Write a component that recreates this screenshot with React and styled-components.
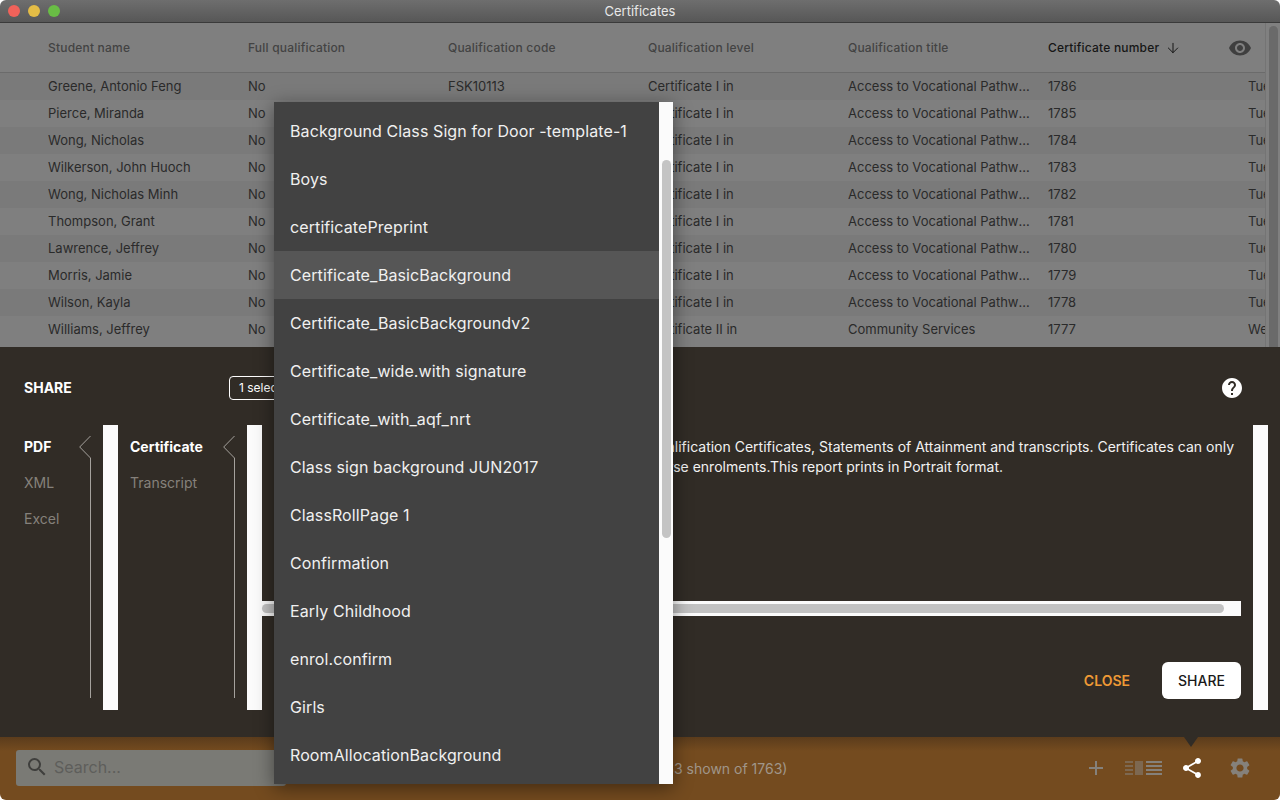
import React from "react";
import styled, { createGlobalStyle } from "styled-components";
import { MdAdd, MdHelp, MdSearch, MdSettings, MdShare, MdVisibility } from "react-icons/md";
import { ArrowDown } from "lucide-react";

const GlobalStyle = createGlobalStyle`
  html, body {
    margin: 0;
    height: 100%;
    background: #fff;
    font-family: Inter, "Noto Sans", sans-serif;
  }
  #root { height: 100%; }
`;

const Window = styled.div`
  position: relative;
  display: flex;
  flex-direction: column;
  width: 1280px;
  height: 800px;
  overflow: hidden;
  border-radius: 6px;
`;

const TitleBar = styled.div`
  position: relative;
  display: flex;
  align-items: center;
  justify-content: center;
  height: 22px;
  flex-shrink: 0;
  background: linear-gradient(#6e6e6e, #575757);
  border-bottom: 1px solid #3a3a3a;
  color: #e8e8e8;
  font-size: 13px;
`;

const Lights = styled.div`
  position: absolute;
  left: 8px;
  top: 5px;
  display: flex;
  gap: 8px;
`;

const Light = styled.span`
  width: 12px;
  height: 12px;
  border-radius: 50%;
  background: ${(props) => props.color};
`;

const TableArea = styled.div`
  display: flex;
  height: 324px;
  flex-shrink: 0;
  background: #7f7f7f;
  overflow: hidden;
`;

const Table = styled.div`
  flex: 1;
  min-width: 0;
  overflow: hidden;
`;

const HeaderRow = styled.div`
  display: flex;
  align-items: center;
  height: 49px;
  padding-left: 48px;
  border-bottom: 1px solid #6b6b6b;
  box-sizing: content-box;
`;

const HeaderCell = styled.div`
  display: flex;
  align-items: center;
  gap: 6px;
  width: 200px;
  flex-shrink: 0;
  font-size: 12px;
  font-weight: 500;
  letter-spacing: 0.2px;
  color: ${(props) => (props.active ? "#161616" : "#434343")};
`;

const Row = styled.div`
  display: flex;
  align-items: center;
  height: 27px;
  padding: 0 0 2px 48px;
  box-sizing: border-box;
  background: ${(props) => (props.odd ? "#7a7a7a" : "#7f7f7f")};
`;

const Cell = styled.div`
  width: 200px;
  flex-shrink: 0;
  padding-right: 16px;
  box-sizing: border-box;
  font-size: 13px;
  color: #2a2a2a;
  white-space: nowrap;
  overflow: hidden;
  text-overflow: ellipsis;
`;

const LastCell = styled(Cell)`
  width: 100px;
  padding: 0;
  text-overflow: clip;
`;

const TableScroll = styled.div`
  width: 15px;
  flex-shrink: 0;
  background: #808080;
  border-left: 1px solid #747474;
  box-sizing: border-box;
  padding: 3px 2px 0 3px;
`;

const TableThumb = styled.div`
  height: 340px;
  border-radius: 5px;
  background: #6a6a6a;
`;

const SharePanel = styled.div`
  display: flex;
  flex-direction: column;
  height: 390px;
  flex-shrink: 0;
  box-sizing: border-box;
  padding: 0 12px 27px 0;
  background: #312c26;
  color: #fff;
`;

const PanelHeader = styled.div`
  display: flex;
  align-items: center;
  height: 78px;
  flex-shrink: 0;
  padding: 3px 24px 0 24px;
  box-sizing: border-box;
`;

const PanelTitle = styled.div`
  width: 205px;
  font-size: 14px;
  font-weight: 700;
`;

const SelectedPill = styled.div`
  display: flex;
  align-items: center;
  height: 24px;
  padding: 0 9px;
  box-sizing: border-box;
  border: 1px solid #fff;
  border-radius: 4px;
  font-size: 12px;
`;

const HelpButton = styled.div`
  display: flex;
  margin-left: auto;
  font-size: 24px;
  color: #fff;
`;

const PanelBody = styled.div`
  display: flex;
  flex: 1;
  min-height: 0;
`;

const NavColumn = styled.div`
  display: flex;
  justify-content: space-between;
  width: ${(props) => props.width}px;
  flex-shrink: 0;
  padding-left: ${(props) => props.inset}px;
  padding-right: 12px;
  box-sizing: border-box;
`;

const NavList = styled.div`
  display: flex;
  flex-direction: column;
  padding-top: 3px;
`;

const NavItem = styled.div`
  display: flex;
  align-items: center;
  height: 36px;
  font-size: 14px;
  font-weight: ${(props) => (props.active ? 700 : 400)};
  color: ${(props) => (props.active ? "#fff" : "#85817b")};
`;

const WhiteBar = styled.div`
  width: 15px;
  flex-shrink: 0;
  background: #fbfbfb;
`;

const MainPane = styled.div`
  display: flex;
  flex: 1;
  min-width: 0;
  flex-direction: column;
  padding-right: 12px;
`;

const Description = styled.div`
  height: 176px;
  flex-shrink: 0;
  padding: 12px 0 0 210px;
  font-size: 14px;
  line-height: 20px;
  color: #f2f2f2;
  white-space: nowrap;
  box-sizing: border-box;
`;

const HScroll = styled.div`
  display: flex;
  align-items: center;
  height: 15px;
  padding: 0 17px 0 0;
  background: #fbfbfb;
`;

const HThumb = styled.div`
  flex: 1;
  height: 9px;
  border-radius: 5px;
  background: #c2c2c2;
`;

const ButtonRow = styled.div`
  display: flex;
  align-items: center;
  justify-content: flex-end;
  gap: 32px;
  margin-top: 46px;
`;

const CloseButton = styled.div`
  font-size: 14px;
  font-weight: 600;
  color: #ef9a35;
`;

const ShareButton = styled.div`
  display: flex;
  align-items: center;
  justify-content: center;
  width: 79px;
  height: 37px;
  border-radius: 6px;
  background: #fff;
  color: #1a1a1a;
  font-size: 14px;
  font-weight: 500;
`;

const BottomBar = styled.div`
  position: relative;
  display: flex;
  flex: 1;
  align-items: center;
  padding: 0 28px 1px 16px;
  background: linear-gradient(#5b3c1c, #744b1f 14px);
`;

const SearchBox = styled.div`
  display: flex;
  align-items: center;
  gap: 5px;
  width: 270px;
  height: 36px;
  padding: 0 0 3px 9px;
  box-sizing: border-box;
  border-radius: 3px;
  background: #7a7a75;
  color: #3f3f3d;
  font-size: 16px;
  flex-shrink: 0;
`;

const SearchText = styled.span`
  color: #5e5e5b;
`;

const Status = styled.div`
  flex: 1;
  padding-left: 285px;
  font-size: 14px;
  color: #a0968a;
  white-space: nowrap;
`;

const BarIcons = styled.div`
  display: flex;
  align-items: center;
  color: #85817b;
`;

const IconSlot = styled.div`
  display: flex;
  margin-left: ${(props) => props.gap || 0}px;
  color: ${(props) => (props.active ? "#fff" : "#85817b")};
`;

const Pointer = styled.div`
  position: absolute;
  right: 82px;
  top: 0;
  width: 0;
  height: 0;
  border-left: 7px solid transparent;
  border-right: 7px solid transparent;
  border-top: 10px solid #312c26;
`;

const Menu = styled.div`
  position: absolute;
  left: 274px;
  top: 102px;
  display: flex;
  width: 399px;
  height: 682px;
  box-shadow: 0 4px 18px rgba(0, 0, 0, 0.45);
`;

const MenuList = styled.div`
  flex: 1;
  padding-top: 5px;
  background: #424242;
`;

const MenuItem = styled.div`
  display: flex;
  align-items: center;
  height: 48px;
  padding-left: 16px;
  font-size: 16px;
  letter-spacing: 0.1px;
  color: #f0f0f0;
  background: ${(props) => (props.active ? "#565656" : "transparent")};
`;

const MenuScroll = styled.div`
  width: 14px;
  flex-shrink: 0;
  padding: 58px 2px 0 3px;
  box-sizing: border-box;
  background: #fbfbfb;
`;

const MenuThumb = styled.div`
  height: 378px;
  border-radius: 5px;
  background: #c4c4c4;
`;

const columns = [
  "Student name",
  "Full qualification",
  "Qualification code",
  "Qualification level",
  "Qualification title",
];

const students = [
  ["Greene, Antonio Feng", "1786"],
  ["Pierce, Miranda", "1785"],
  ["Wong, Nicholas", "1784"],
  ["Wilkerson, John Huoch", "1783"],
  ["Wong, Nicholas Minh", "1782"],
  ["Thompson, Grant", "1781"],
  ["Lawrence, Jeffrey", "1780"],
  ["Morris, Jamie", "1779"],
  ["Wilson, Kayla", "1778"],
  ["Williams, Jeffrey", "1777"],
];

const templates = [
  "Background Class Sign for Door -template-1",
  "Boys",
  "certificatePreprint",
  "Certificate_BasicBackground",
  "Certificate_BasicBackgroundv2",
  "Certificate_wide.with signature",
  "Certificate_with_aqf_nrt",
  "Class sign background JUN2017",
  "ClassRollPage 1",
  "Confirmation",
  "Early Childhood",
  "enrol.confirm",
  "Girls",
  "RoomAllocationBackground",
];

const NavLine = () => (
  <svg width="12" height="274" viewBox="0 0 12 274" fill="none" stroke="#a5a29d" strokeWidth="1">
    <path d="M11.5 11 L0.7 22 L11.5 33 V273" />
  </svg>
);

const ViewToggle = () => (
  <svg width="37" height="16" viewBox="0 0 37 16" fill="#85817b">
    <g opacity="0.55">
      <rect x="0" y="1" width="8" height="2" />
      <rect x="0" y="5" width="8" height="2" />
      <rect x="0" y="9" width="8" height="2" />
      <rect x="0" y="13" width="8" height="2" />
      <rect x="10" y="1" width="8" height="14" />
    </g>
    <rect x="21" y="1" width="16" height="2" />
    <rect x="21" y="5" width="16" height="2" />
    <rect x="21" y="9" width="16" height="2" />
    <rect x="21" y="13" width="16" height="2" />
  </svg>
);

const App = () => {
  return (
    <Window>
      <GlobalStyle />
      <TitleBar>
        <Lights>
          <Light color="#f0625a" />
          <Light color="#e3bc46" />
          <Light color="#69bd45" />
        </Lights>
        Certificates
      </TitleBar>

      <TableArea>
        <Table>
          <HeaderRow>
            {columns.map((column) => (
              <HeaderCell key={column}>{column}</HeaderCell>
            ))}
            <HeaderCell active>
              Certificate number
              <ArrowDown size={16} strokeWidth={1.5} />
            </HeaderCell>
            <MdVisibility size={24} color="#3f3f3f" style={{ marginLeft: -20 }} />
          </HeaderRow>
          {students.map(([name, number], index) => (
            <Row key={number} odd={index % 2 === 0}>
              <Cell>{name}</Cell>
              <Cell>No</Cell>
              <Cell>{index === 0 ? "FSK10113" : ""}</Cell>
              <Cell>{index === 9 ? "Certificate II in" : "Certificate I in"}</Cell>
              <Cell>{index === 9 ? "Community Services" : "Access to Vocational Pathways"}</Cell>
              <Cell>{number}</Cell>
              <LastCell>{index === 9 ? "Wed" : "Tue"}</LastCell>
            </Row>
          ))}
        </Table>
        <TableScroll>
          <TableThumb />
        </TableScroll>
      </TableArea>

      <SharePanel>
        <PanelHeader>
          <PanelTitle>SHARE</PanelTitle>
          <SelectedPill>1 selected</SelectedPill>
          <HelpButton>
            <MdHelp />
          </HelpButton>
        </PanelHeader>
        <PanelBody>
          <NavColumn width={103} inset={24}>
            <NavList>
              <NavItem active>PDF</NavItem>
              <NavItem>XML</NavItem>
              <NavItem>Excel</NavItem>
            </NavList>
            <NavLine />
          </NavColumn>
          <WhiteBar />
          <NavColumn width={129} inset={12}>
            <NavList>
              <NavItem active>Certificate</NavItem>
              <NavItem>Transcript</NavItem>
            </NavList>
            <NavLine />
          </NavColumn>
          <WhiteBar />
          <MainPane>
            <Description>
              <div>This report prints National Qualification Certificates, Statements of Attainment and transcripts. Certificates can only</div>
              <div>be created for completed course enrolments.This report prints in Portrait format.</div>
            </Description>
            <HScroll>
              <HThumb />
            </HScroll>
            <ButtonRow>
              <CloseButton>CLOSE</CloseButton>
              <ShareButton>SHARE</ShareButton>
            </ButtonRow>
          </MainPane>
          <WhiteBar />
        </PanelBody>
      </SharePanel>

      <BottomBar>
        <SearchBox>
          <MdSearch size={24} />
          <SearchText>Search...</SearchText>
        </SearchBox>
        <Status>1763 records (63 shown of 1763)</Status>
        <BarIcons>
          <IconSlot>
            <MdAdd size={24} />
          </IconSlot>
          <IconSlot gap={17}>
            <ViewToggle />
          </IconSlot>
          <IconSlot gap={18} active>
            <MdShare size={24} />
          </IconSlot>
          <IconSlot gap={24}>
            <MdSettings size={24} />
          </IconSlot>
        </BarIcons>
        <Pointer />
      </BottomBar>

      <Menu>
        <MenuList>
          {templates.map((template) => (
            <MenuItem key={template} active={template === "Certificate_BasicBackground"}>
              {template}
            </MenuItem>
          ))}
        </MenuList>
        <MenuScroll>
          <MenuThumb />
        </MenuScroll>
      </Menu>
    </Window>
  );
};

export default App;
